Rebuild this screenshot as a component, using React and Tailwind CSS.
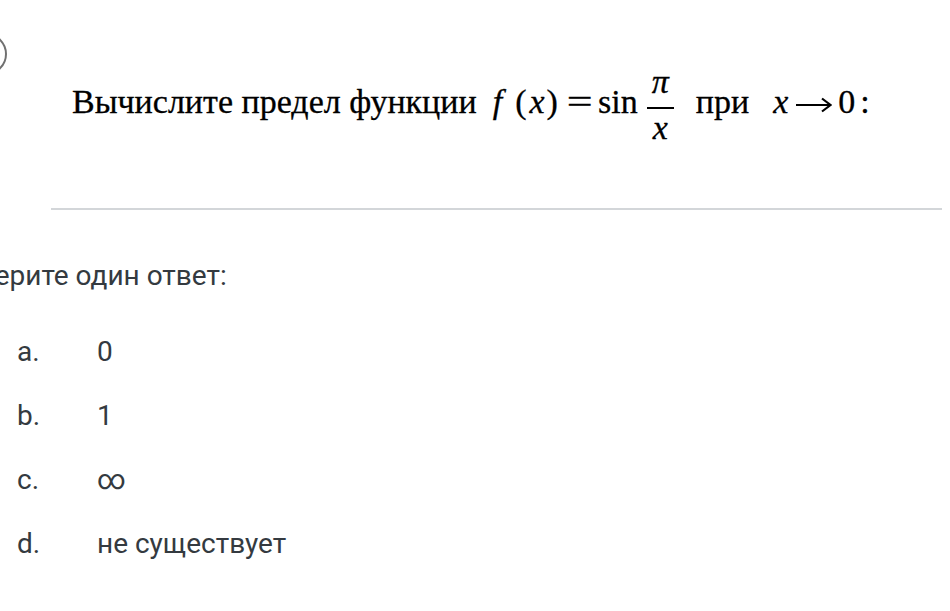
import React from "react";

const options = [
    { letter: "a.", text: "0" },
    { letter: "b.", text: "1" },
    { letter: "c.", text: "∞" },
    { letter: "d.", text: "не существует" },
];

/* ---------- FORMULA ---------- */
// every item starts at the row top; text spans get a top margin so their baseline sits at y=113
const Formula = () => (
    <div className="flex items-start font-['Liberation_Serif',serif] text-[34px] text-black [-webkit-text-stroke:0.3px_black]">
        <span className="mt-[13px] leading-[34px] ml-[16px] italic">f</span>
        <span className="mt-[13px] leading-[34px] ml-[13px]">(</span>
        <span className="mt-[13px] leading-[34px] ml-[3px] italic">x</span>
        <span className="mt-[13px] leading-[34px] ml-[2px]">)</span>
        <span className="mt-[13px] leading-[34px] ml-[12px] inline-block scale-x-[1.35]">=</span>
        <span className="mt-[13px] leading-[34px] ml-[9px]">sin</span>
        <div className="ml-[9px] w-[27px] flex flex-col items-center">
            <span className="italic leading-[20px] h-[20px]">π</span>
            <span className="mt-[15px] w-[27px] h-[2px] bg-black" />
            <span className="mt-[9px] italic leading-[20px] h-[20px]">x</span>
        </div>
        <span className="mt-[13px] leading-[34px] ml-[22px]">при</span>
        <span className="mt-[13px] leading-[34px] ml-[24px] italic">x</span>
        <svg className="mt-[25px] ml-[7px]" width="37" height="16" viewBox="0 0 37 16" fill="none" stroke="black" strokeWidth="2.2">
            <path d="M1 8 H35" />
            <path d="M27 1.5 L35.5 8 L27 14.5" />
        </svg>
        <span className="mt-[13px] leading-[34px] ml-[6px]">0</span>
        <span className="mt-[13px] leading-[34px] ml-[5px]">:</span>
    </div>
);

/* ---------- MAIN ---------- */
export default function App() {
    return (
        <div className="relative w-[950px] h-[611px] overflow-hidden bg-white font-['Roboto',sans-serif] text-[#343a40]">
            {/* question number badge, cut off at the left edge */}
            <div className="absolute left-[-35px] top-[33px] w-[42px] h-[42px] rounded-full border-2 border-[#707070]" />

            {/* QUESTION */}
            <div className="h-[138px] pt-[72px] pl-[72px] flex items-start">
                <span className="mt-[13px] leading-[34px] font-['Liberation_Serif',serif] text-[34px] text-black whitespace-nowrap [-webkit-text-stroke:0.3px_black]">
                    Вычислите предел функции
                </span>
                <Formula />
            </div>

            <div className="mt-[70px] ml-[51px] w-[891px] h-[2px] bg-[#d3d6d9]" />

            {/* ANSWERS */}
            <p className="mt-[51px] -ml-[60px] text-[28px] leading-[30px] whitespace-nowrap">Выберите один ответ:</p>

            <div className="mt-[44px] flex flex-col gap-[30px]">
                {options.map(o => (
                    <div key={o.letter} className="flex items-center text-[28px] leading-[34px]">
                        <span className="w-[97px] pl-[17px]">{o.letter}</span>
                        <span>{o.text}</span>
                    </div>
                ))}
            </div>
        </div>
    );
}
